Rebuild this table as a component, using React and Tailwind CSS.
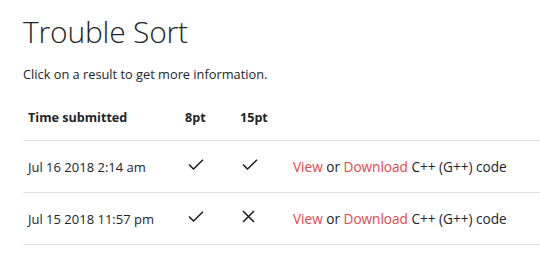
const Check = () => (
  <svg width="16" height="11" viewBox="0 0 16 11" className="inline-block">
    <path d="M1 5.5 L5.5 10 L15 0.8" fill="none" stroke="#1a1a1a" strokeWidth="1.5" />
  </svg>
);

const Cross = () => (
  <svg width="13" height="13" viewBox="0 0 13 13" className="inline-block">
    <path d="M1 1 L12 12 M12 1 L1 12" fill="none" stroke="#1a1a1a" strokeWidth="1.5" />
  </svg>
);

const rows = [
  { time: 'Jul 16 2018 2:14 am', a: true, b: true },
  { time: 'Jul 15 2018 11:57 pm', a: true, b: false },
];

export default function App() {
  return (
    <div className="bg-white min-h-screen pl-[23px] pt-[12px] text-[#212529] font-['Open_Sans',sans-serif]">
      <h1 className="text-[30px] font-light leading-[40px] tracking-[-0.2px]">Trouble Sort</h1>
      <p className="mt-[12px] text-[12.8px] leading-[20px]">Click on a result to get more information.</p>
      <table className="mt-[13px] w-full text-[13px] border-collapse">
        <thead>
          <tr className="border-b border-[#dee2e6]">
            <th className="text-left font-bold text-[12.6px] w-[157px] pl-[5px] h-[43px] align-middle">Time submitted</th>
            <th className="text-left font-bold text-[12.6px] w-[55px] pl-[5px] align-middle">8pt</th>
            <th className="text-left font-bold text-[12.6px] w-[53px] pl-[5px] align-middle">15pt</th>
            <th></th>
          </tr>
        </thead>
        <tbody>
          {rows.map((r) => (
            <tr key={r.time} className="border-b border-[#dee2e6]">
              <td className="pl-[5px] pt-[3px] h-[52px] align-middle">{r.time}</td>
              <td className="pl-[8px] pb-[4px] align-middle">{r.a ? <Check /> : <Cross />}</td>
              <td className="pl-[7px] pb-[4px] align-middle">{r.b ? <Check /> : <Cross />}</td>
              <td className="pl-[5px] pt-[3px] align-middle text-[13.6px]">
                <a href="#" className="text-[#e2474b]">View</a> or{' '}
                <a href="#" className="text-[#e2474b]">Download</a> C++ (G++) code
              </td>
            </tr>
          ))}
        </tbody>
      </table>
    </div>
  );
}
